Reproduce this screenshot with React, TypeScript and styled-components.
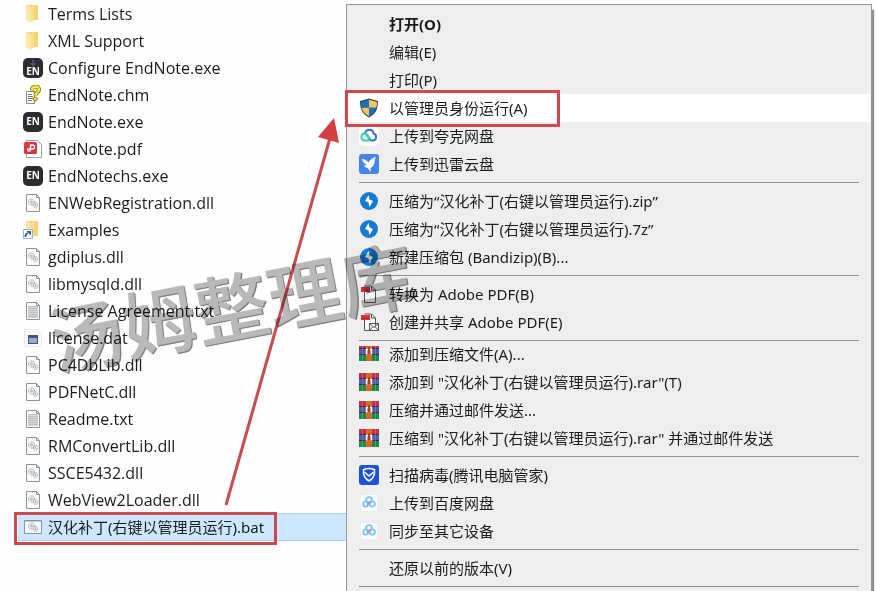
import React from "react";
import styled, { createGlobalStyle, css } from "styled-components";

const Global = createGlobalStyle`
  * { box-sizing: border-box; }
  body { margin: 0; background: #fff; overflow: hidden; }
`;

const Page = styled.main`
  position: relative;
  display: grid;
  grid-template-columns: 25fr 38fr;
  height: 100vh;
  padding-right: 4px;
  overflow: hidden;
  background: #fefefe;
  color: #1c1c1c;
  font-family: "Noto Sans", "Noto Sans CJK SC", sans-serif;
  font-size: 15px;
  line-height: 20px;
`;

const FileList = styled.ul`
  margin: 0;
  padding: 0 0 0 18px;
  list-style: none;
`;

const FileRow = styled.button<{ $selected?: boolean }>`
  display: flex;
  align-items: center;
  gap: 5px;
  width: 100%;
  height: 27px;
  padding: 0 0 0 5px;
  border: 0;
  background: transparent;
  color: inherit;
  font: 16px/20px "Open Sans", "Noto Sans CJK SC", sans-serif;
  text-align: left;
  white-space: nowrap;
  ${(p) =>
    p.$selected &&
    css`
      height: 28px;
      border: 1px solid #a6d3f5;
      border-width: 1px 0;
      background: #cce7ff;
      font: inherit;
    `}
`;

const IconBox = styled.span`
  display: flex;
  flex: none;
  align-items: center;
  justify-content: center;
  width: 20px;
  height: 20px;
`;

const Marked = styled.span`
  position: relative;
  display: flex;
  align-items: center;
  gap: inherit;
`;

const MarkFrame = styled.span<{ $area: string }>`
  position: absolute;
  inset: ${(p) => p.$area};
  border: 3px solid #cb4a4f;
  pointer-events: none;
`;

const Menu = styled.div`
  align-self: stretch;
  margin-top: 4px;
  min-height: 640px;
  padding: 5px 1px 0;
  border: 1px solid #979797;
  background: #eeeeee;
  box-shadow: 2px 6px 1px #8b9090;
`;

const MenuItem = styled.button<{ $active?: boolean; $strong?: boolean }>`
  display: flex;
  align-items: center;
  gap: 10px;
  width: 100%;
  height: 28px;
  padding: 0 0 0 11px;
  border: 0;
  background: ${(p) => (p.$active ? "#fff" : "transparent")};
  color: inherit;
  font: inherit;
  font-weight: ${(p) => (p.$strong ? 700 : 400)};
  text-align: left;
  white-space: nowrap;
`;

const Divider = styled.hr<{ $tight?: boolean }>`
  height: 1px;
  margin: 4px 11px ${(p) => (p.$tight ? -1 : 4)}px;
  border: 0;
  background: #929292;
`;

const Watermark = styled.div`
  position: absolute;
  left: 46px;
  top: 249px;
  color: #bababa;
  font: 500 74px/110px "Noto Sans CJK SC", sans-serif;
  text-shadow: 1px 1px 0 #808080, 1px 1px 1px #888;
  white-space: nowrap;
  transform: rotate(-11deg);
  mix-blend-mode: multiply;
  pointer-events: none;
`;

const Arrow = styled.svg`
  position: absolute;
  left: 0;
  top: 0;
  pointer-events: none;
`;

const Folder = ({ link }: { link?: boolean }) => (
  <svg width="20" height="20" viewBox="0 0 20 20">
    <path d="M3 1h12v15H3z" fill="#f7d377" />
    <path d="M3 1l5 2v16l-5-3z" fill="#fde6a4" />
    <path d="M8 3l3-2v15l-3 2z" fill="#fbdc8b" />
    {link && (
      <g>
        <path d="M.5 9.500h9v9h-9z" fill="#fff" stroke="#9ab0c4" />
        <path d="M2.500 17c-.3-2.500.8-3.500 2.500-4" fill="none" stroke="#235d9c" strokeWidth="1.800" />
        <path d="M3.500 11h4.500v4.500z" fill="#235d9c" />
      </g>
    )}
  </svg>
);

const EndNote = ({ arrow }: { arrow?: boolean }) => (
  <svg width="20" height="20" viewBox="0 0 20 20">
    <rect width="20" height="20" rx="5" fill="#2c2d30" />
    <text x="10" y={arrow ? 17 : 13} textAnchor="middle" fill="#fff" fontFamily="Open Sans" fontWeight="700" fontSize="10">EN</text>
    {arrow && <path d="M10 2v5M7.500 5l2.500 2.500 2.500-2.500" fill="none" stroke="#6875a5" />}
  </svg>
);

const Sheet = () => <path d="M3.500 1.500h10l3 3v14h-13z M13.500 1.500v3h3" fill="#fbfbfb" stroke="#8e9296" />;

const Gears = () => (
  <g fill="none" stroke="#8fa0ae">
    <circle cx="8.500" cy="9" r="3" strokeDasharray="1.500 .6" />
    <circle cx="8.500" cy="9" r="1" />
    <circle cx="12.500" cy="12" r="2.300" strokeDasharray="1.300 .5" />
    <circle cx="12.500" cy="12" r=".6" />
  </g>
);

const Dll = () => (
  <svg width="20" height="20" viewBox="0 0 20 20"><Sheet /><Gears /></svg>
);

const Txt = () => (
  <svg width="20" height="20" viewBox="0 0 20 20">
    <Sheet />
    <path d="M5 5h10v12H5z" fill="#d3d5d7" />
    <path d="M5 5.500h10M5 7.500h10M5 9.500h10M5 11.500h10M5 13.500h10M5 15.500h10" stroke="#bfc2c4" />
  </svg>
);

const Dat = () => (
  <svg width="20" height="20" viewBox="0 0 20 20">
    <path d="M1.500 1.500h14l3 3v14h-17z" fill="#f7f8f9" stroke="#e6e8ea" />
    <path d="M5 7h10v9H5z" fill="#45566f" />
    <path d="M6 10h8v5H6z" fill="#8faadb" />
  </svg>
);

const Bat = () => (
  <svg width="20" height="20" viewBox="0 0 20 20">
    <path d="M1.500 3.500h17v13h-17z" fill="#f7f9fa" stroke="#8b9299" />
    <path d="M2 4.500h16" stroke="#c9ced2" />
    <Gears />
  </svg>
);

const Chm = () => (
  <svg width="20" height="20" viewBox="0 0 20 20">
    <path d="M3.500 6.500h8v12h-8z" fill="#fff" stroke="#8a8a8a" />
    <path d="M5 9.500h4M5 11.500h5M5 13.500h5M5 15.500h4" stroke="#777" />
    <path d="M9 5.500c0-5 7-5 7-1 0 3-3.500 2.500-3.500 6" fill="none" stroke="#66610c" strokeWidth="4" />
    <path d="M9 5.500c0-5 7-5 7-1 0 3-3.500 2.500-3.500 6" fill="none" stroke="#f7e92c" strokeWidth="2.600" />
    <circle cx="12.300" cy="14" r="2" fill="#f7e92c" stroke="#66610c" strokeWidth=".8" />
  </svg>
);

const Pdf = () => (
  <svg width="20" height="20" viewBox="0 0 20 20">
    <path d="M3.500 1.500h11l4 4v13h-15z" fill="#fff" stroke="#9a9da0" />
    <rect x="1" y="3" width="13" height="12" rx="1.500" fill="#de3340" />
    <path d="M7.500 11.500V6h2a2 2 0 010 4H5.500a1 1 0 000 2h2" fill="none" stroke="#fff" strokeWidth="1.300" />
  </svg>
);

const Shield = () => (
  <svg width="20" height="20" viewBox="0 0 20 20">
    <path d="M10 0.500L1 3c0 8 2 13 9 16.500C17 16 19 11 19 3z" fill="#2f4a55" />
    <path d="M10 1.800v8H2.600C2.200 8 2 6 2 4z" fill="#1b6fb8" />
    <path d="M10 1.800v8h7.400C17.800 8 18 6 18 4z" fill="#f7c65c" />
    <path d="M10 9.800v8.500c-4-2-6.500-5-7.400-8.500z" fill="#f7c65c" />
    <path d="M10 9.800v8.500c4-2 6.500-5 7.400-8.500z" fill="#1b6fb8" />
  </svg>
);

const Quark = () => (
  <svg width="20" height="20" viewBox="0 0 20 20">
    <rect width="20" height="20" rx="5" fill="#fdfdfd" />
    <path d="M6 7.500c1-5 8-5 8.500 0 4 1 3 7-.5 7h-2L7.500 9" fill="none" stroke="#2f6fd8" strokeWidth="1.900" strokeLinejoin="round" />
    <path d="M9.800 14.500H6c-5 0-4.500-7-.5-7 3 0 4.300 2 4.300 7z" fill="none" stroke="#2fd0b6" strokeWidth="1.900" strokeLinejoin="round" />
  </svg>
);

const Xunlei = () => (
  <svg width="20" height="20" viewBox="0 0 20 20">
    <rect width="20" height="20" rx="3" fill="#4583ee" />
    <path d="M3 5c3 .3 4.500 1.200 6.500 3.500C10.500 6 13 4 17 2.500c-.8 1.500-.8 2.500-1.300 4.500-.5 4-1.700 6-4.200 7l.5 4-3.500-4c-1.500-.3-2.500-1-3.500-2.500l3-.5C5 9.500 3.500 8 3 5z" fill="#fff" />
  </svg>
);

const Bandizip = () => (
  <svg width="20" height="20" viewBox="0 0 20 20">
    <circle cx="10" cy="10" r="9" fill="#1679d3" />
    <path d="M9.500 4L6 10l3.500 1.500L10.500 16l3.500-6-3.500-1.500z" fill="#fff" />
  </svg>
);

const Acrobat = ({ mail }: { mail?: boolean }) => (
  <svg width="20" height="20" viewBox="0 0 20 20">
    <path d="M5.500 8v10.500h11V6l-4-4h-7M12.500 2v4h4" fill="#f7f7f7" stroke="#555" />
    <path d="M2 3h9v5H2z" fill="#dd303c" />
    <path d="M3.500 6.500h6" stroke="#b41f2b" />
    {mail && <path d="M10.500 11.500h9v7h-9zM10.500 11.500l4.500 4 4.500-4M10.500 18.500l3.500-4M19.500 18.500l-3.500-4" fill="#fff" stroke="#555" />}
  </svg>
);

const Rar = ({ clipped }: { clipped?: boolean }) => (
  <svg width="20" height={clipped ? 16 : 20} viewBox={clipped ? "0 4 20 16" : "0 0 20 20"}>
    <rect y="1" width="20" height="6" fill="#c42f4b" />
    <rect y="7" width="20" height="6" fill="#5558ac" />
    <rect y="13" width="20" height="6" fill="#1c8a48" />
    <path d="M0 6.500h20M0 12.500h20" stroke="#3a2c46" />
    <path d="M3.500 1v18M16.500 1v18" stroke="#fff" strokeOpacity=".2" />
    <rect x="7" y="1" width="6" height="18" fill="#d76b2b" />
    <path d="M7.500 12.500V7.500h5v5" fill="none" stroke="#fff" strokeWidth="1.500" />
    <path d="M9 5h2v7H9z" fill="#a4432c" />
  </svg>
);

const Guard = () => (
  <svg width="20" height="20" viewBox="0 0 20 20">
    <rect width="20" height="20" rx="3" fill="#1d4fe0" />
    <path d="M10 3.500c2 0 4 .5 5.500 1.200.5 5-1.500 9-5.500 11.300-4-2.300-6-6.300-5.500-11.300C6 4 8 3.500 10 3.500z" fill="none" stroke="#fff" strokeWidth="1.500" />
    <path d="M5.500 7l4.500 4 4.500-4" fill="none" stroke="#fff" strokeWidth="1.500" />
  </svg>
);

const Baidu = () => (
  <svg width="20" height="20" viewBox="0 0 20 20">
    <rect x="2" y="2" width="16" height="16" rx="2" fill="#fcfdfe" />
    <g fill="none" stroke="#7cc6f2" strokeWidth="1.800">
      <circle cx="10" cy="7" r="2.800" />
      <circle cx="6.700" cy="11" r="2.600" />
      <circle cx="13.300" cy="11" r="2.600" />
    </g>
    <path d="M8 11.500l3.500-3" stroke="#e0748c" strokeWidth="1.500" />
  </svg>
);

const files: [string, React.ReactNode][] = [
  ["Terms Lists", <Folder />],
  ["XML Support", <Folder />],
  ["Configure EndNote.exe", <EndNote arrow />],
  ["EndNote.chm", <Chm />],
  ["EndNote.exe", <EndNote />],
  ["EndNote.pdf", <Pdf />],
  ["EndNotechs.exe", <EndNote />],
  ["ENWebRegistration.dll", <Dll />],
  ["Examples", <Folder link />],
  ["gdiplus.dll", <Dll />],
  ["libmysqld.dll", <Dll />],
  ["License Agreement.txt", <Txt />],
  ["license.dat", <Dat />],
  ["PC4DbLib.dll", <Dll />],
  ["PDFNetC.dll", <Dll />],
  ["Readme.txt", <Txt />],
  ["RMConvertLib.dll", <Dll />],
  ["SSCE5432.dll", <Dll />],
  ["WebView2Loader.dll", <Dll />],
];

type Entry = { label: string; icon?: React.ReactNode; strong?: boolean; marked?: boolean };

const groups: Entry[][] = [
  [
    { label: "打开(O)", strong: true },
    { label: "编辑(E)" },
    { label: "打印(P)" },
    { label: "以管理员身份运行(A)", icon: <Shield />, marked: true },
    { label: "上传到夸克网盘", icon: <Quark /> },
    { label: "上传到迅雷云盘", icon: <Xunlei /> },
  ],
  [
    { label: "压缩为“汉化补丁(右键以管理员运行).zip”", icon: <Bandizip /> },
    { label: "压缩为“汉化补丁(右键以管理员运行).7z”", icon: <Bandizip /> },
    { label: "新建压缩包 (Bandizip)(B)...", icon: <Bandizip /> },
  ],
  [
    { label: "转换为 Adobe PDF(B)", icon: <Acrobat /> },
    { label: "创建并共享 Adobe PDF(E)", icon: <Acrobat mail /> },
  ],
  [
    { label: "添加到压缩文件(A)...", icon: <Rar clipped /> },
    { label: '添加到 "汉化补丁(右键以管理员运行).rar"(T)', icon: <Rar /> },
    { label: "压缩并通过邮件发送...", icon: <Rar /> },
    { label: '压缩到 "汉化补丁(右键以管理员运行).rar" 并通过邮件发送', icon: <Rar /> },
  ],
  [
    { label: "扫描病毒(腾讯电脑管家)", icon: <Guard /> },
    { label: "上传到百度网盘", icon: <Baidu /> },
    { label: "同步至其它设备", icon: <Baidu /> },
  ],
  [{ label: "还原以前的版本(V)" }],
];

export default function App() {
  return (
    <Page>
      <Global />
      <FileList>
        {files.map(([name, icon]) => (
          <li key={name}>
            <FileRow>
              <IconBox>{icon}</IconBox>
              {name}
            </FileRow>
          </li>
        ))}
        <li>
          <FileRow $selected>
            <Marked>
              <IconBox><Bat /></IconBox>
              汉化补丁(右键以管理员运行).bat
              <MarkFrame $area="-5px -13px -8px -9px" />
            </Marked>
          </FileRow>
        </li>
      </FileList>
      <Menu role="menu">
        {groups.map((group, g) => (
          <React.Fragment key={g}>
            {group.map((item) => (
              <MenuItem key={item.label} role="menuitem" $active={item.marked} $strong={item.strong}>
                {item.marked ? (
                  <Marked>
                    <IconBox>{item.icon}</IconBox>
                    {item.label}
                    <MarkFrame $area="-8px -32px -9px -14px" />
                  </Marked>
                ) : (
                  <>
                    <IconBox>{item.icon}</IconBox>
                    {item.label}
                  </>
                )}
              </MenuItem>
            ))}
            <Divider $tight={g === 2} />
          </React.Fragment>
        ))}
      </Menu>
      <Arrow width="350" height="520" viewBox="0 0 350 520">
        <path d="M226 505L330 138" stroke="#cb4a4f" strokeWidth="3" />
        <path d="M334 118L339 143L318 137z" fill="#d23f43" />
      </Arrow>
      <Watermark>汤姆整理库</Watermark>
    </Page>
  );
}
